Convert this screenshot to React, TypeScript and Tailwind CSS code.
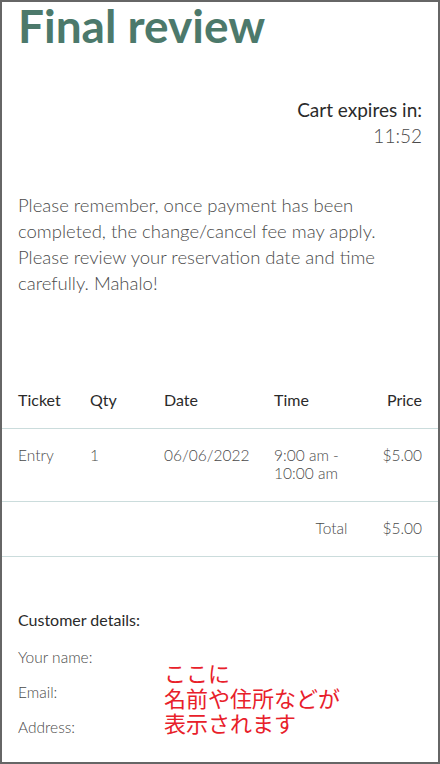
const rows = [
  { ticket: 'Entry', qty: '1', date: '06/06/2022', time: ['9:00 am -', '10:00 am'], price: '$5.00' },
];

export default function App() {
  return (
    <div className="h-[764px] overflow-hidden border-2 border-[#666] bg-white font-['Lato','Noto_Sans',sans-serif]">
      <h1 className="px-4 text-[46px] font-bold leading-[48px] text-[#4c796b]">Final review</h1>

      <div className="mt-[47px] px-4 text-right text-[19px] leading-[26px]">
        <p className="text-[#2a2a2a]">Cart expires in:</p>
        <p className="font-light text-[#4a4a4a]">11:52</p>
      </div>

      <p className="mt-[43px] px-4 text-[18.5px] font-light leading-[26px] text-[#4a4a4a]">
        Please remember, once payment has been completed, the change/cancel fee may apply. Please review your reservation date and time carefully. Mahalo!
      </p>

      <div className="mt-[92px]">
        <div className="grid grid-cols-[72px_74px_110px_1fr_auto] border-b border-[#cbdcdc] px-4 pb-4 text-[16px] leading-6 text-[#2a2a2a]">
          <span>Ticket</span>
          <span>Qty</span>
          <span>Date</span>
          <span>Time</span>
          <span className="text-right">Price</span>
        </div>
        {rows.map((r) => (
          <div
            key={r.ticket}
            className="grid grid-cols-[72px_74px_110px_1fr_auto] border-b border-[#cbdcdc] px-4 pt-[17px] pb-[19px] text-[15.5px] font-light leading-[18px] text-[#4a4a4a]"
          >
            <span>{r.ticket}</span>
            <span>{r.qty}</span>
            <span>{r.date}</span>
            <span>
              {r.time[0]}
              <br />
              {r.time[1]}
            </span>
            <span className="text-right">{r.price}</span>
          </div>
        ))}
        <div className="flex justify-end gap-[35px] border-b border-[#cbdcdc] px-4 pt-[17px] pb-[19px] text-[15.5px] font-light leading-[18px] text-[#4a4a4a]">
          <span>Total</span>
          <span>$5.00</span>
        </div>
      </div>

      <div className="mt-[53px] px-4">
        <p className="text-[16px] leading-5 text-[#2a2a2a]">Customer details:</p>
        <div className="mt-[17px] flex">
          <div className="flex w-[146px] flex-col gap-[15px] text-[15.5px] font-light leading-5 text-[#4a4a4a]">
            <span>Your name:</span>
            <span>Email:</span>
            <span>Address:</span>
          </div>
          <p className="mt-[13px] text-[22px] leading-[25px] text-[#e8202a] font-['Noto_Sans_CJK_JP',sans-serif]">
            ここに
            <br />
            名前や住所などが
            <br />
            表示されます
          </p>
        </div>
      </div>
    </div>
  );
}
